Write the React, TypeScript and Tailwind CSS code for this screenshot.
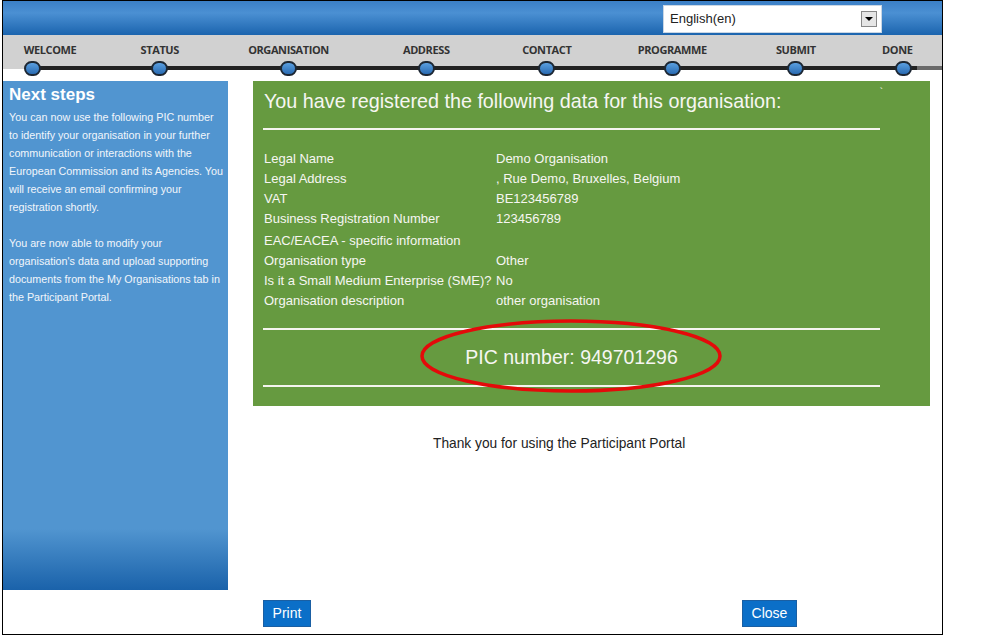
import React from "react";

const steps = [
  { label: "WELCOME", cls: "ml-[-11px]", labelCls: "pl-[36px]" },
  { label: "STATUS", cls: "ml-[49px]", labelCls: "" },
  { label: "ORGANISATION", cls: "ml-[50px]", labelCls: "" },
  { label: "ADDRESS", cls: "ml-[59px]", labelCls: "" },
  { label: "CONTACT", cls: "ml-[43px]", labelCls: "" },
  { label: "PROGRAMME", cls: "ml-[48px]", labelCls: "" },
  { label: "SUBMIT", cls: "ml-[46px]", labelCls: "" },
  { label: "DONE", cls: "ml-[30px]", labelCls: "pr-[12px]" },
];

const rows = [
  { label: "Legal Name", value: "Demo Organisation" },
  { label: "Legal Address", value: ", Rue Demo, Bruxelles, Belgium" },
  { label: "VAT", value: "BE123456789" },
  { label: "Business Registration Number", value: "123456789" },
  { label: "EAC/EACEA - specific information", value: "", extra: "mt-[2px]" },
  { label: "Organisation type", value: "Other" },
  { label: "Is it a Small Medium Enterprise (SME)?", value: "No" },
  { label: "Organisation description", value: "other organisation" },
];

function Stepper() {
  return (
    <div className="relative h-[46px] bg-[linear-gradient(to_bottom,#d1d1d1_34px,#ffffff_34px)]">
      {/* track */}
      <div className="absolute left-[29px] top-[31px] h-[4px] w-[885px] bg-[#222]" />
      <div className="absolute left-[914px] right-0 top-[31px] h-[4px] bg-[#6a6a6a]" />
      <div className="relative flex pt-[8px]">
        {steps.map((s) => (
          <div key={s.label} className={`flex w-[80px] flex-col items-center ${s.cls}`}>
            <span
              className={`whitespace-nowrap text-[11px] font-bold leading-[14px] tracking-[-0.4px] text-[#333] ${s.labelCls}`}
              style={{ fontFamily: "'Open Sans', 'DejaVu Sans', sans-serif" }}
            >
              {s.label}
            </span>
            <span className="mt-[4px] h-[15px] w-[17px] rounded-full border-2 border-[#1d2733] bg-[linear-gradient(to_bottom,#5a9fe0,#2a6bb2)]" />
          </div>
        ))}
      </div>
    </div>
  );
}

function Sidebar() {
  return (
    <aside className="h-full w-[225px] shrink-0 bg-[linear-gradient(to_bottom,#5195d0_88%,#1a62aa)] pl-[6px] pt-[4px] text-white">
      <h2 className="text-[17px] font-bold leading-[20px]">Next steps</h2>
      <p className="mt-[3px] text-[10.75px] leading-[18px] text-[#f2f6fb]">
        You can now use the following PIC number
        <br />
        to identify your organisation in your further
        <br />
        communication or interactions with the
        <br />
        European Commission and its Agencies. You
        <br />
        will receive an email confirming your
        <br />
        registration shortly.
      </p>
      <p className="mt-[18px] text-[10.75px] leading-[18px] text-[#f2f6fb]">
        You are now able to modify your
        <br />
        organisation's data and upload supporting
        <br />
        documents from the My Organisations tab in
        <br />
        the Participant Portal.
      </p>
    </aside>
  );
}

function DataPanel() {
  return (
    <section className="relative h-[325px] w-[677px] bg-[#669a40] pl-[10px] pr-[50px] pt-[8px] text-[#f6f6f2]">
      <div className="flex items-start justify-between">
        <h1 className="pl-[1px] text-[19.75px] leading-[24px]">
          You have registered the following data for this organisation:
        </h1>
        <span className="-mr-[3px] mt-[-4px] text-[10px]">`</span>
      </div>
      <div className="mt-[15px] h-[2px] bg-[#f4f4ee]" />
      <div className="mt-[19px] pl-[1px] text-[13px]">
        {rows.map((r) => (
          <div key={r.label} className={`flex h-[20px] items-center ${r.extra ?? ""}`}>
            <span className="w-[232px] shrink-0 whitespace-nowrap">{r.label}</span>
            <span>{r.value}</span>
          </div>
        ))}
      </div>
      <div className="mt-[17px] h-[2px] bg-[#f4f4ee]" />
      <div className="flex h-[55px] items-center justify-center text-[19.5px]">
        PIC number: 949701296
      </div>
      <div className="h-[2px] bg-[#f4f4ee]" />
      {/* red highlight annotation */}
      <svg
        className="pointer-events-none absolute left-[166px] top-[237px]"
        width="304"
        height="76"
        viewBox="0 0 304 76"
      >
        <ellipse cx="152" cy="38" rx="149" ry="35" fill="none" stroke="#e40a0a" strokeWidth="3.5" />
      </svg>
    </section>
  );
}

export default function App() {
  return (
    <div
      className="min-h-screen bg-white"
      style={{ fontFamily: "'Liberation Sans', Arial, sans-serif" }}
    >
      <div className="ml-[2px] flex h-[635px] w-[941px] flex-col border border-black">
        {/* header */}
        <header className="flex h-[34px] items-center justify-end bg-[linear-gradient(to_bottom,#3b7fc6,#4b90d3_35%,#1b64ae)] pr-[60px]">
          <div className="mt-[2px] flex h-[28px] w-[219px] items-center justify-between border border-[#c9d6e4] bg-white pl-[6px] pr-[4px]">
            <span className="text-[13px] text-[#222]">English(en)</span>
            <span className="flex h-[16px] w-[16px] items-center justify-center border border-[#888] bg-[#e6e6e6]">
              <span className="h-0 w-0 border-x-[4px] border-t-[4px] border-x-transparent border-t-black" />
            </span>
          </div>
        </header>

        <Stepper />

        <div className="flex h-[509px]">
          <Sidebar />
          <main className="ml-[25px] flex flex-col">
            <DataPanel />
            <p className="mt-[30px] pl-[180px] text-[13.75px] leading-[16px] text-[#222]">
              Thank you for using the Participant Portal
            </p>
          </main>
        </div>

        <footer className="flex pl-[260px] pt-[10px]">
          <button className="h-[27px] w-[48px] border border-[#1a5fa3] bg-[#0b6fc8] text-[14px] text-white">
            Print
          </button>
          <button className="ml-[431px] h-[27px] w-[55px] border border-[#1a5fa3] bg-[#0b6fc8] text-[14px] text-white">
            Close
          </button>
        </footer>
      </div>
    </div>
  );
}
